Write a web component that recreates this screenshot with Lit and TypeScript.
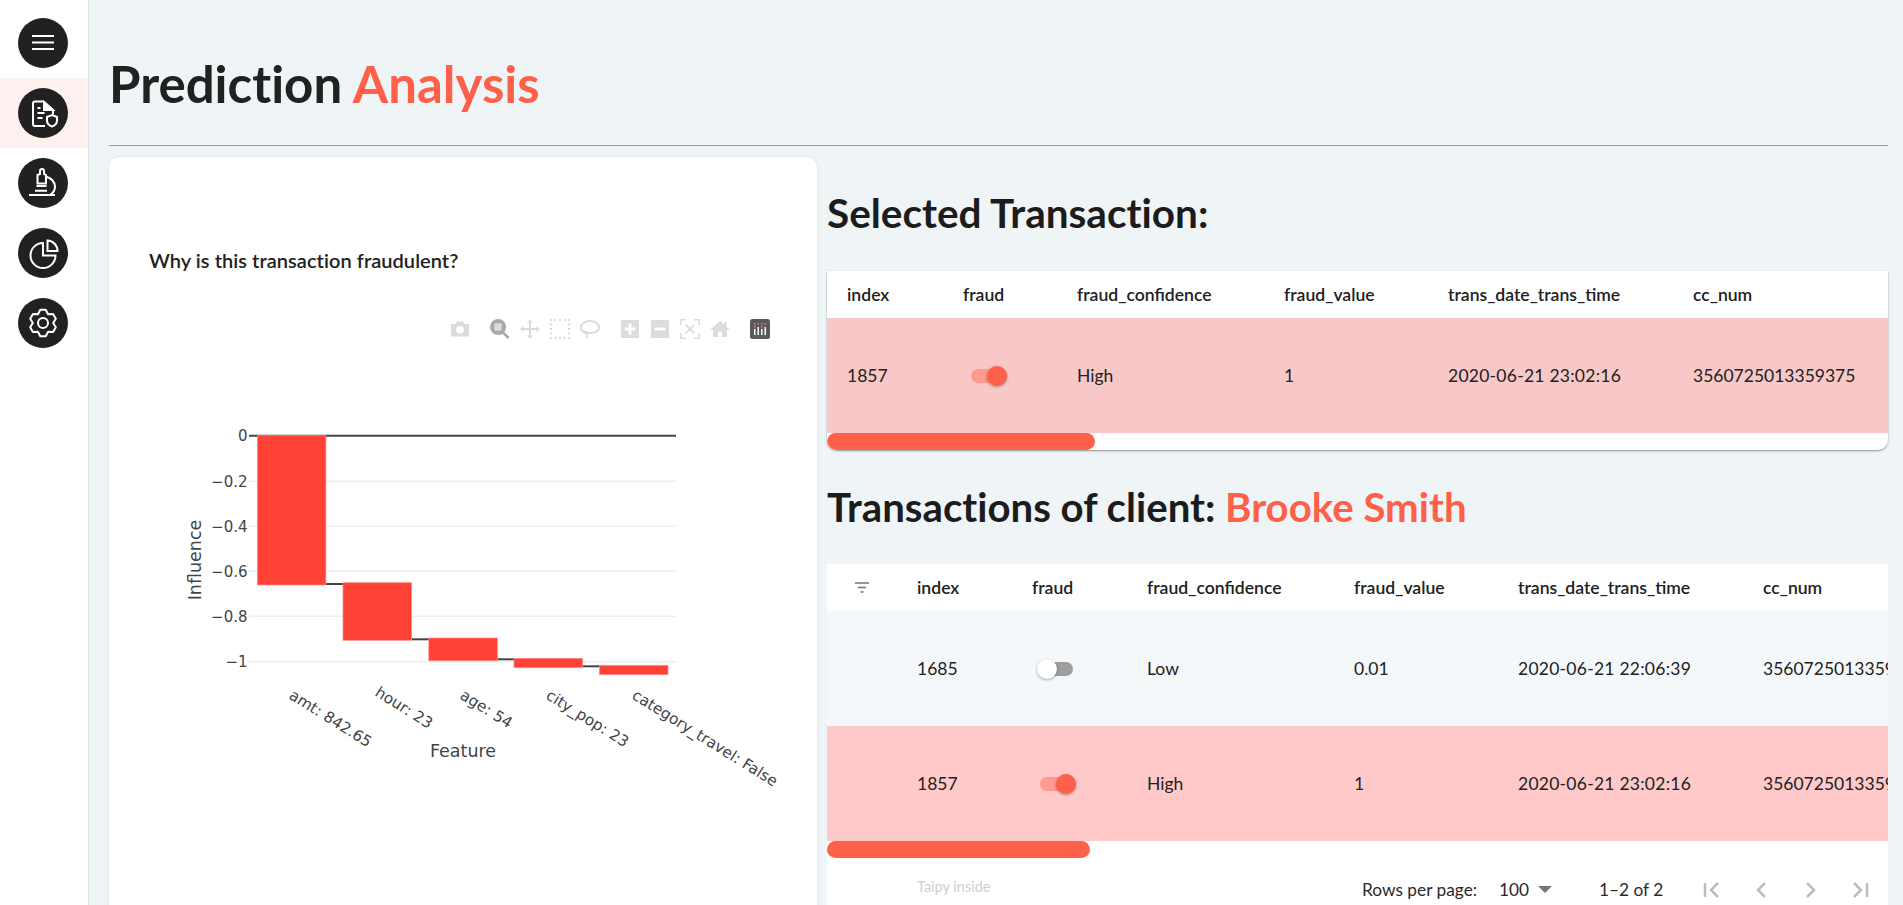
import { LitElement, html, css, svg } from "lit";
import { customElement } from "lit/decorators.js";

const COLS_A = [116, 114, 207, 164, 245, 300];
const COLS_B = [70, 115, 115, 207, 164, 245, 300];
const HEAD = ["index", "fraud", "fraud_confidence", "fraud_value", "trans_date_trans_time", "cc_num"];

interface Tx {
  index: string;
  on: boolean;
  conf: string;
  value: string;
  date: string;
  cc: string;
}

const SELECTED: Tx[] = [
  { index: "1857", on: true, conf: "High", value: "1", date: "2020-06-21 23:02:16", cc: "3560725013359375" },
];
const CLIENT: Tx[] = [
  { index: "1685", on: false, conf: "Low", value: "0.01", date: "2020-06-21 22:06:39", cc: "3560725013359375" },
  { index: "1857", on: true, conf: "High", value: "1", date: "2020-06-21 23:02:16", cc: "3560725013359375" },
];

// six lobed gear for the settings button
function gearPath() {
  const pts: string[] = [];
  for (let i = 0; i < 6; i++) {
    const mid = (i * Math.PI) / 3 - Math.PI / 2;
    const at = (r: number, off: number) =>
      `${(25 + r * Math.cos(mid + off)).toFixed(1)} ${(25 + r * Math.sin(mid + off)).toFixed(1)}`;
    pts.push(at(13.5, -0.2), at(13.5, 0.2), at(10.2, Math.PI / 6));
  }
  return "M" + pts.join("L") + "Z";
}

const NAV = [
  svg`<path d="M14 18h22M14 24.500h22M14 31h22" />`,
  svg`<path d="M27 38H17a2 2 0 0 1-2-2V15.500a2 2 0 0 1 2-2h8.500l9.500 8.500v4" />
    <path d="M26 14v8h9z" fill="#fff" />
    <path d="M19.500 20h3M19.500 25h7M19.500 30h5" />
    <path d="M34 27l5 2v3.500c0 3-2 5-5 6-3-1-5-3-5-6V29z" />`,
  svg`<path d="M11 37h26M17 32.700h12M18.500 28h10" />
    <path d="M19.500 25.500V17l2.500-1v-3a2 2 0 0 1 4 0v3l2 1v8.500z" />
    <path d="M28 18.700c5 1 9 5 9 10 0 4-2 6.300-5 8.300" />`,
  svg`<path d="M25 15a12.500 12.500 0 1 0 12.500 12.500H25z" />
    <path d="M29.500 12.500a10.500 10.500 0 0 1 10 10.500h-10z" />`,
  svg`<path d="${gearPath()}" stroke-linejoin="round" /><circle cx="25" cy="25" r="5" />`,
];

const TICKS = [
  { y: 435.7, label: "0", zero: true },
  { y: 481.3, label: "−0.2" },
  { y: 526.3, label: "−0.4" },
  { y: 571.3, label: "−0.6" },
  { y: 616.3, label: "−0.8" },
  { y: 661.7, label: "−1" },
];
const BARS = [
  { x: 257.3, y: 435.7, w: 68.6, h: 149.3, label: "amt: 842.65", lx: 288, ly: 698 },
  { x: 343, y: 582.7, w: 68.6, h: 57.6, label: "hour: 23", lx: 374, ly: 695 },
  { x: 428.8, y: 638, w: 68.6, h: 22.7, label: "age: 54", lx: 459, ly: 698 },
  { x: 514, y: 658.3, w: 68.6, h: 9.4, label: "city_pop: 23", lx: 545, ly: 698 },
  { x: 599.4, y: 665.3, w: 68.6, h: 9.4, label: "category_travel: False", lx: 631, ly: 698 },
];
const LINKS = [
  { x: 326, y: 584 },
  { x: 411.6, y: 639.3 },
  { x: 497.4, y: 659.3 },
  { x: 582.6, y: 666.3 },
];

@customElement("app-root")
export class AppRoot extends LitElement {
  static styles = css`
    :host {
      display: flex;
      height: 905px;
      overflow: hidden;
      background: #eff4f7;
      color: #212121;
      font-family: Lato, "Open Sans", sans-serif;
    }

    .sidebar {
      flex: none;
      width: 88px;
      background: #fff;
      border-right: 1px solid #dde2e5;
      padding-top: 8px;
    }

    .nav-item {
      display: flex;
      align-items: center;
      height: 70px;
      padding-left: 18px;
    }

    .nav-item.active {
      background: #fdf1ef;
    }

    .nav-item svg {
      display: block;
    }

    .nav-item .glyph {
      fill: none;
      stroke: #fff;
      stroke-width: 2;
    }

    main {
      flex: 1;
      min-width: 0;
      padding: 0 15px 0 20px;
    }

    h1 {
      margin: 0;
      padding: 54px 0 31px;
      font-size: 51px;
      line-height: 60px;
      font-weight: 700;
      font-variant-ligatures: none;
      border-bottom: 1px solid #9a9a9a;
    }

    .accent {
      color: #ff6049;
    }

    .columns {
      display: flex;
      gap: 10px;
      margin-top: 11px;
    }

    .card {
      flex: none;
      width: 708px;
      height: 900px;
      background: #fff;
      border-radius: 10px;
      box-shadow: 0 0 4px rgba(0, 0, 0, 0.08);
    }

    .question {
      margin: 0;
      padding: 90px 0 0 40px;
      font-size: 20px;
      letter-spacing: 0.050px;
      line-height: 26px;
      font-weight: 600;
      font-variant-ligatures: none;
    }

    .modebar {
      display: flex;
      justify-content: flex-end;
      gap: 20px;
      margin-top: 46px;
      padding-right: 47px;
    }

    .modebar .group {
      display: flex;
      gap: 10px;
    }

    .modebar svg {
      display: block;
      width: 20px;
      height: 20px;
      fill: #dcdcdc;
    }

    .chart {
      display: block;
      margin-top: 11px;
    }

    .chart text {
      font-family: "DejaVu Sans", sans-serif;
      fill: #444;
    }

    .right {
      flex: 1;
      min-width: 0;
    }

    h2 {
      margin: 0;
      font-size: 40.500px;
      line-height: 50px;
      font-weight: 700;
      font-variant-ligatures: none;
      color: #1c1c1c;
    }

    .first-head {
      padding-top: 31px;
      padding-bottom: 33px;
    }

    .second-head {
      font-size: 40.200px;
      padding-top: 32px;
      padding-bottom: 32px;
    }

    .panel {
      background: #fff;
      overflow: hidden;
    }

    .panel.selected {
      border-radius: 0 0 10px 10px;
      box-shadow: 0 1px 2px rgba(0, 0, 0, 0.4);
    }

    table {
      border-collapse: collapse;
      table-layout: fixed;
      font-size: 17.500px;
    }

    th {
      height: 47px;
      padding: 0 0 0 20px;
      text-align: left;
      font-size: 17.600px;
      font-weight: 600;
      background: #fff;
      white-space: nowrap;
    }

    td {
      height: 115px;
      padding: 0 0 0 20px;
      white-space: nowrap;
      overflow: hidden;
    }

    td.date {
      letter-spacing: 0.250px;
    }

    th.filter {
      padding-left: 28px;
    }

    .filter svg {
      display: block;
    }

    tr.pink td {
      background: #f8c7c7;
    }

    tr.stripe td {
      background: #f5f8fa;
    }

    tr.rose td {
      background: #ffc9c9;
    }

    .switch {
      display: block;
      position: relative;
      width: 34px;
      height: 14px;
      border-radius: 7px;
      background: #9e9e9e;
      margin-left: 7px;
    }

    .switch.on {
      background: #ff9b8e;
      margin-left: 8px;
    }

    .thumb {
      position: absolute;
      top: -3px;
      left: -2px;
      width: 20px;
      height: 20px;
      border-radius: 50%;
      background: #fff;
      box-shadow: 0 1px 3px rgba(0, 0, 0, 0.35);
    }

    .switch.on .thumb {
      left: 16px;
      background: #ff6049;
    }

    .hbar {
      height: 17px;
    }

    .hbar div {
      height: 17px;
      border-radius: 9px;
      background: #ff6049;
    }

    .foot {
      display: flex;
      align-items: center;
      height: 47px;
      padding: 8px 2px 0 90px;
      font-size: 17.300px;
      color: #2a2a2a;
    }

    .taipy {
      width: 445px;
      font-size: 14.500px;
      color: #cfcfcf;
      margin-top: -7px;
    }

    .perpage {
      width: 137px;
    }

    .size {
      display: flex;
      align-items: center;
      gap: 9px;
      width: 100px;
    }

    .caret {
      width: 0;
      height: 0;
      border-left: 7px solid transparent;
      border-right: 7px solid transparent;
      border-top: 7px solid #757575;
    }

    .range {
      width: 87px;
      white-space: nowrap;
    }

    .pager {
      display: flex;
    }

    .pager svg {
      display: block;
      width: 50px;
      height: 24px;
      fill: none;
      stroke: #bdbdbd;
      stroke-width: 2.500;
    }
  `;

  renderNav() {
    return NAV.map(
      (glyph, i) => html`
        <div class="nav-item ${i === 1 ? "active" : ""}">
          <svg width="50" height="50" viewBox="0 0 50 50">
            <circle cx="25" cy="25" r="25" fill="#212121" />
            <g class="glyph">${glyph}</g>
          </svg>
        </div>
      `
    );
  }

  renderModebar() {
    return html`
      <div class="modebar">
        <div class="group">
          <svg viewBox="0 0 20 20">
            <path
              fill-rule="evenodd"
              d="M1 5h4l2-2.500h6L15 5h4v12.500H1zM10 7a3.800 3.800 0 1 0 0 7.600A3.800 3.800 0 0 0 10 7z"
            />
          </svg>
        </div>
        <div class="group">
          <svg viewBox="0 0 20 20">
            <rect x="4.500" y="4.500" width="7" height="7" fill="#dcdcdc" />
            <path
              fill="#a8a8a8"
              fill-rule="evenodd"
              d="M8 0a8 8 0 0 1 6.300 12.900l5.200 5.200-1.800 1.800-5.200-5.200A8 8 0 1 1 8 0zM4.500 4.500v7h7v-7z"
            />
          </svg>
          <svg viewBox="0 0 20 20">
            <path
              d="M10 0l3 3.500h-2v5.500h5.500V7l3.500 3-3.500 3v-2H11v5.500h2l-3 3.500-3-3.500h2V11H3.500v2L0 10l3.500-3v2H9V3.500H7z"
            />
          </svg>
          <svg viewBox="0 0 20 20">
            <path
              d="M0 0h2v2H0zM4.500 0h2v2h-2zM9 0h2v2H9zM13.500 0h2v2h-2zM18 0h2v2h-2zM0 4.500h2v2H0zM18 4.500h2v2h-2zM0 9h2v2H0zM18 9h2v2h-2zM0 13.500h2v2H0zM18 13.500h2v2h-2zM0 18h2v2H0zM4.500 18h2v2h-2zM9 18h2v2H9zM13.500 18h2v2h-2zM18 18h2v2h-2z"
            />
          </svg>
          <svg viewBox="0 0 20 20">
            <path
              d="M4 14.500C1.500 13 0 11 0 8.500 0 4 4.500 1 10 1s10 3 10 7.500S15.500 15 10 15H7.500c.5 1.500.5 3-.5 4.500l-1.500-.5c.8-1.200.9-2.500.5-4zM10 3C5.500 3 2 5.500 2 8.500c0 1.700 1 3 2.500 4 .8-1.200 3-1 3.200.5H10c4.500 0 8-1.800 8-4.500S14.500 3 10 3z"
            />
          </svg>
        </div>
        <div class="group">
          <svg viewBox="0 0 20 20">
            <path fill-rule="evenodd" d="M1 1h18v18H1zM8.500 4.500v4h-4v3h4v4h3v-4h4v-3h-4v-4z" />
          </svg>
          <svg viewBox="0 0 20 20">
            <path fill-rule="evenodd" d="M1 1h18v18H1zM4.500 8.500v3h11v-3z" />
          </svg>
          <svg viewBox="0 0 20 20">
            <path
              d="M0 0h6v1.500H1.500V6H0zM14 0h6v6h-1.500V1.500H14zM0 14h1.500v4.500H6V20H0zM18.500 14H20v6h-6v-1.500h4.500zM5 6.200L6.200 5 10 8.800 13.800 5 15 6.200 11.200 10 15 13.800 13.800 15 10 11.200 6.200 15 5 13.800 8.800 10 5 6.200z"
            />
          </svg>
          <svg viewBox="0 0 20 20">
            <path d="M10 2l4 3.500V3h2.500v4.700L20 11h-3v7h-5v-5H8v5H3v-7H0z" />
          </svg>
        </div>
        <div class="group">
          <svg viewBox="0 0 20 20">
            <rect width="20" height="20" rx="2.500" fill="#5a5a5a" />
            <path d="M4 10h1.500v6H4zM7.500 8h1.500v8H7.500zM11 10h1.500v6H11zM14.500 8H16v8h-1.500z" fill="#fff" />
            <path d="M4 4h1.500v1.500H4zM7.500 4H9v1.500H7.500zM11 4h1.500v1.500H11zM14.500 4H16v1.500h-1.500zM4 7h1.500v1.500H4zM11 7h1.500v1.500H11z" fill="#e77da8" />
          </svg>
        </div>
      </div>
    `;
  }

  // viewBox uses page coordinates, it made reading the bars off the reference easier
  renderChart() {
    return html`
      <svg class="chart" width="708" height="500" viewBox="109 350 708 500">
        ${TICKS.map(
          (t) => svg`
            <line x1="249" x2="676" y1=${t.y} y2=${t.y} stroke=${t.zero ? "#444" : "#eee"} stroke-width=${t.zero ? 2 : 1.5} />
            <text x="247.500" y=${t.y + 5.500} text-anchor="end" font-size="15">${t.label}</text>
          `
        )}
        ${LINKS.map(
          (l) => svg`<line x1=${l.x} x2=${l.x + 17.400} y1=${l.y} y2=${l.y} stroke="#444" stroke-width="2" />`
        )}
        ${BARS.map(
          (b) => svg`
            <rect x=${b.x} y=${b.y} width=${b.w} height=${b.h} fill="#ff4136" stroke="#ff8d86" stroke-width="0.700" />
            <text x=${b.lx} y=${b.ly} font-size="15.300" transform="rotate(32 ${b.lx} ${b.ly})">${b.label}</text>
          `
        )}
        <text x="463" y="757" text-anchor="middle" font-size="17.500">Feature</text>
        <text x="201" y="560" text-anchor="middle" font-size="17.500" transform="rotate(-90 201 560)">Influence</text>
      </svg>
    `;
  }

  renderRow(row: Tx, cls: string, withFilter: boolean) {
    return html`
      <tr class=${cls}>
        ${withFilter ? html`<td></td>` : ""}
        <td>${row.index}</td>
        <td>
          <span class="switch ${row.on ? "on" : ""}"><span class="thumb"></span></span>
        </td>
        <td>${row.conf}</td>
        <td>${row.value}</td>
        <td class="date">${row.date}</td>
        <td>${row.cc}</td>
      </tr>
    `;
  }

  renderTable(cols: number[], rows: Tx[], classes: string[], withFilter: boolean) {
    const total = cols.reduce((a, b) => a + b, 0);
    return html`
      <table style="width:${total}px">
        <colgroup>
          ${cols.map((w) => html`<col style="width:${w}px" />`)}
        </colgroup>
        <thead>
          <tr>
            ${withFilter
              ? html`<th class="filter">
                  <svg width="15" height="12" viewBox="0 0 15 12">
                    <path d="M0 1h14M3 5.500h8M5.500 10h3" stroke="#757575" stroke-width="1.300" />
                  </svg>
                </th>`
              : ""}
            ${HEAD.map((h) => html`<th>${h}</th>`)}
          </tr>
        </thead>
        <tbody>
          ${rows.map((r, i) => this.renderRow(r, classes[i], withFilter))}
        </tbody>
      </table>
    `;
  }

  render() {
    return html`
      <aside class="sidebar">${this.renderNav()}</aside>
      <main>
        <h1>Prediction <span class="accent">Analysis</span></h1>
        <div class="columns">
          <section class="card">
            <p class="question">Why is this transaction fraudulent?</p>
            ${this.renderModebar()} ${this.renderChart()}
          </section>
          <section class="right">
            <h2 class="first-head">Selected Transaction:</h2>
            <div class="panel selected">
              ${this.renderTable(COLS_A, SELECTED, ["pink"], false)}
              <div class="hbar"><div style="width:268px"></div></div>
            </div>
            <h2 class="second-head">Transactions of client: <span class="accent">Brooke Smith</span></h2>
            <div class="panel">
              ${this.renderTable(COLS_B, CLIENT, ["stripe", "rose"], true)}
              <div class="hbar"><div style="width:263px"></div></div>
              <div class="foot">
                <span class="taipy">Taipy inside</span>
                <span class="perpage">Rows per page:</span>
                <span class="size">100 <span class="caret"></span></span>
                <span class="range">1–2 of 2</span>
                <span class="pager">
                  <svg viewBox="0 0 50 24"><path d="M19 5v14M32 5l-7 7 7 7" /></svg>
                  <svg viewBox="0 0 50 24"><path d="M29 5l-7 7 7 7" /></svg>
                  <svg viewBox="0 0 50 24"><path d="M21 5l7 7-7 7" /></svg>
                  <svg viewBox="0 0 50 24"><path d="M18 5l7 7-7 7M31 5v14" /></svg>
                </span>
              </div>
            </div>
          </section>
        </div>
      </main>
    `;
  }
}
